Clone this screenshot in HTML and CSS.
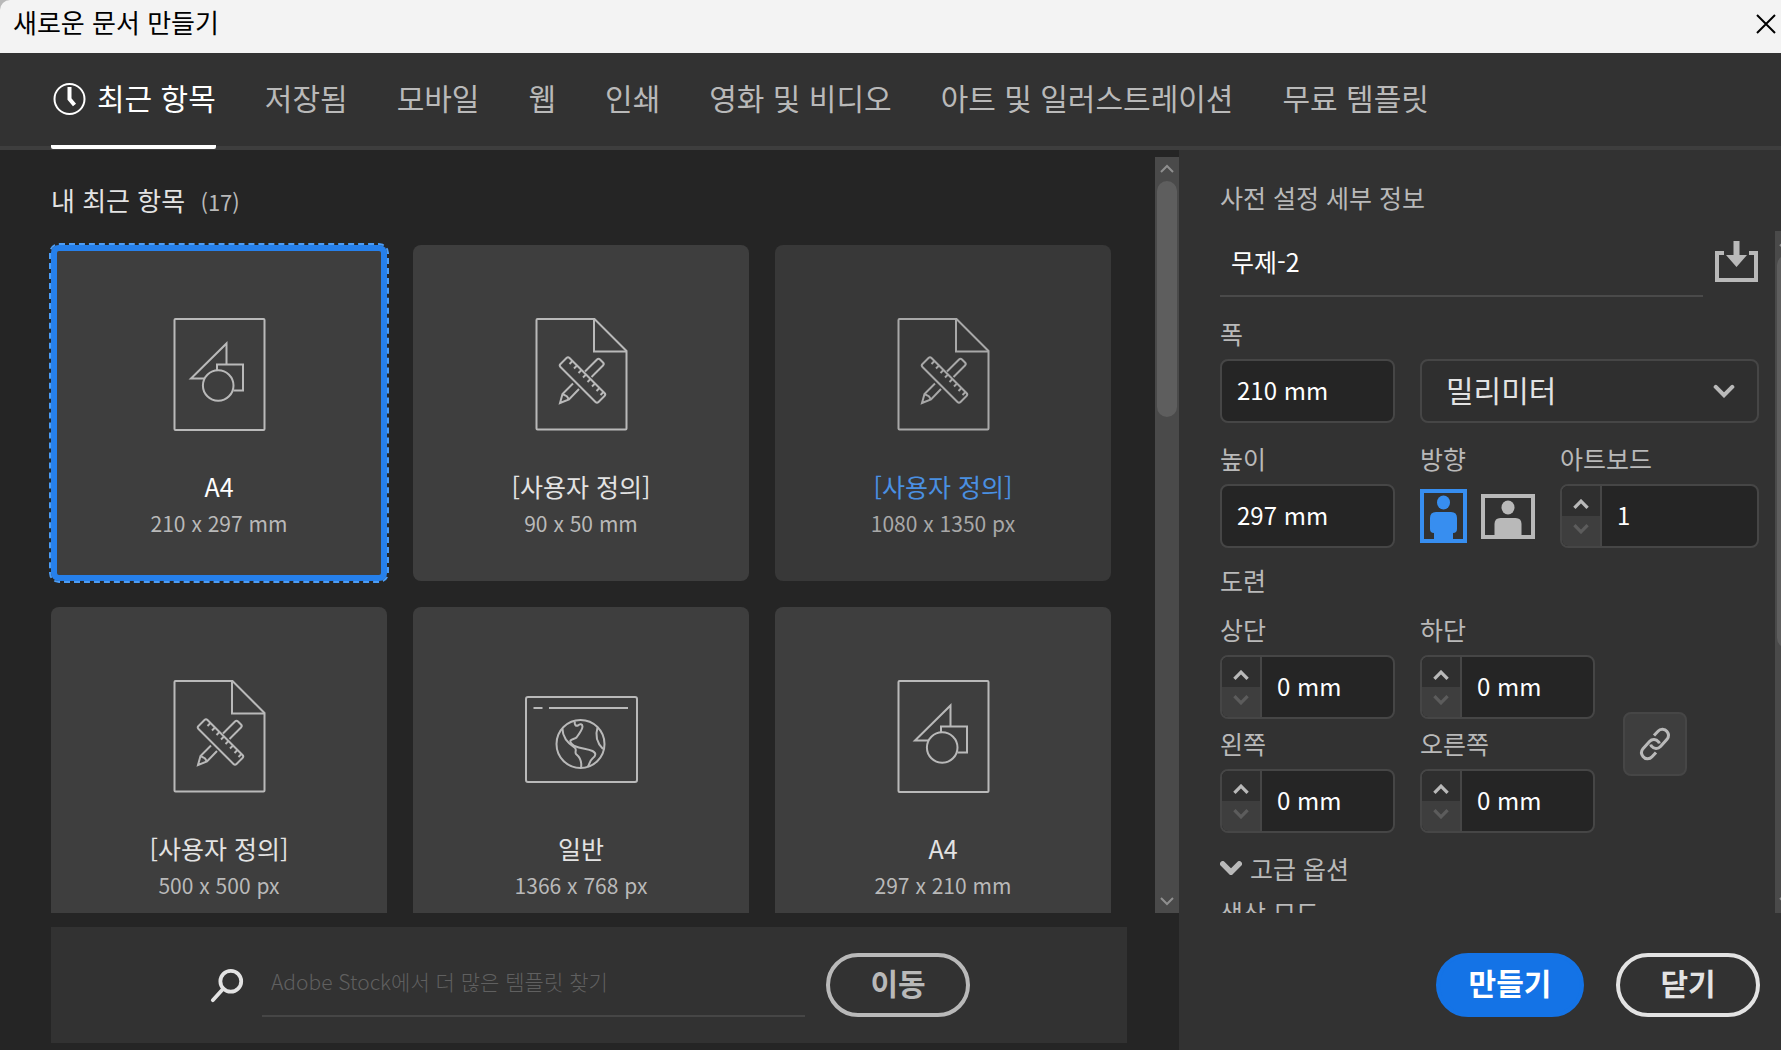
FILE: index.html
```html
<!DOCTYPE html>
<html lang="ko">
<head>
    <meta charset="UTF-8">
    <meta name="viewport" content="width=device-width, initial-scale=1">
    <title>새로운 문서 만들기</title>
    <link rel="stylesheet" href="styles.css">
</head>
<body>

<!-- shared icons -->
<svg class="sprite" aria-hidden="true">
    <symbol id="doc-art" viewBox="0 0 113 113">
        <g transform="translate(10.5 0)">
            <rect x="1" y="1" width="90" height="111" rx="1"/>
            <path d="M53 46.500V25.500L17.500 60.500H31"/>
            <path d="M43.500 52v-5.500h26v26H60"/>
            <circle cx="44.700" cy="67.500" r="15.300"/>
        </g>
    </symbol>
    <symbol id="doc-custom" viewBox="0 0 113 113">
        <g transform="translate(10.500 0)">
            <path d="M2 1h57l32 32v77.500q0 1-1 1H2q-1 0-1-1V2q0-1 1-1z"/>
            <path d="M58.500 1v32.500H91"/>
            <path d="M31 40q1.500-1.500 3 0l35 35q1.500 1.500 0 3l-6 6q-1.500 1.500-3 0l-35-35q-1.500-1.500 0-3z"/>
            <path d="M37 43l-3 3M41.500 47.500l-3 3M46 52l-3 3M50.500 56.500l-3 3M55 61l-3 3M59.500 65.500l-3 3M64 70l-3 3M68 74l-3 3"/>
            <path d="M49.500 53.500l12-12q1.500-1.500 3 0l3 3q1.500 1.500 0 3l-11.500 11.500"/>
            <path d="M37.500 65.500L27 76l-2.500 9 9-3.500L43.500 71"/>
            <path d="M27 76l3 1.500 1.500 1 2 3"/>
        </g>
    </symbol>
    <symbol id="doc-web" viewBox="0 0 113 113">
        <g transform="translate(0 16)">
            <rect x="1" y="1" width="111" height="85" rx="2"/>
            <path d="M8.500 12h9M24 12h79"/>
            <circle cx="55.500" cy="48" r="24"/>
            <path d="M37.500 33c0 8 5 14 12.500 19 2 2-.5 4 1 6 5 4 6 8 5 14"/>
            <path d="M50 25.500c-1 3 1 5 3 4 2-2 4.500-1.500 4.500 1 0 3-3 7-6 11-1.500 1.500-4 1-6 3-1 2 1 3.500 4 5.500 7 3 13 2.500 18 5 4 2 3.500 5 0 7.500-3 2.500-3 6-5 8.500"/>
            <path d="M72.500 31.500c-2.500 8-1 15 5.500 21.500"/>
        </g>
    </symbol>
    <symbol id="up" viewBox="0 0 16 10"><path d="M2 8l6-6 6 6"/></symbol>
    <symbol id="down" viewBox="0 0 16 10"><path d="M2 2l6 6 6-6"/></symbol>
</svg>

<header class="titlebar">
    <h1>새로운 문서 만들기</h1>
    <button class="close" aria-label="닫기">
        <svg width="20" height="20" viewBox="0 0 20 20"><path d="M1 1l18 18M19 1L1 19"/></svg>
    </button>
</header>

<nav class="tabs">
    <a href="#" class="tab active">
        <svg class="clock" width="36" height="34" viewBox="0 0 36 34">
            <circle cx="18.500" cy="17" r="15"/>
            <path d="M18.500 5v12l5 6"/>
        </svg>
        최근 항목
    </a>
    <a href="#" class="tab">저장됨</a>
    <a href="#" class="tab">모바일</a>
    <a href="#" class="tab">웹</a>
    <a href="#" class="tab">인쇄</a>
    <a href="#" class="tab">영화 및 비디오</a>
    <a href="#" class="tab">아트 및 일러스트레이션</a>
    <a href="#" class="tab">무료 템플릿</a>
</nav>

<main class="content">
    <section class="browse">
        <div class="scroller">
            <div class="list">
                <h2>내 최근 항목 <span class="count">(17)</span></h2>
                <div class="cards">
                    <button class="card selected">
                        <svg class="thumb"><use href="#doc-art"/></svg>
                        <span class="name">A4</span>
                        <span class="size">210 x 297 mm</span>
                    </button>
                    <button class="card">
                        <svg class="thumb"><use href="#doc-custom"/></svg>
                        <span class="name">[사용자 정의]</span>
                        <span class="size">90 x 50 mm</span>
                    </button>
                    <button class="card hovered">
                        <svg class="thumb"><use href="#doc-custom"/></svg>
                        <span class="name">[사용자 정의]</span>
                        <span class="size">1080 x 1350 px</span>
                    </button>
                    <button class="card">
                        <svg class="thumb"><use href="#doc-custom"/></svg>
                        <span class="name">[사용자 정의]</span>
                        <span class="size">500 x 500 px</span>
                    </button>
                    <button class="card">
                        <svg class="thumb"><use href="#doc-web"/></svg>
                        <span class="name">일반</span>
                        <span class="size">1366 x 768 px</span>
                    </button>
                    <button class="card">
                        <svg class="thumb"><use href="#doc-art"/></svg>
                        <span class="name">A4</span>
                        <span class="size">297 x 210 mm</span>
                    </button>
                </div>
            </div>
            <div class="scrollbar">
                <svg class="arrow"><use href="#up"/></svg>
                <div class="track"><div class="handle"></div></div>
                <svg class="arrow"><use href="#down"/></svg>
            </div>
        </div>

        <form class="stock">
            <svg class="search" width="36" height="38" viewBox="0 0 36 38">
                <circle cx="22" cy="14" r="11"/>
                <path d="M14 22L3 34"/>
            </svg>
            <input type="text" aria-label="Adobe Stock 검색" placeholder="Adobe Stock에서 더 많은 템플릿 찾기">
            <button type="button" class="pill">이동</button>
        </form>
    </section>

    <aside class="details">
        <h2>사전 설정 세부 정보</h2>
        <div class="scroller">
            <div class="form">
                <div class="doc-name">
                    <input type="text" aria-label="이름" value="무제-2">
                    <button class="save" aria-label="사전 설정 저장">
                        <svg width="44" height="42" viewBox="0 0 44 42">
                            <path class="tray" d="M9 12H2v27h39V12h-7"/>
                            <path class="arrow-fill" d="M18.500 0h6v14H32L21.500 26 11 14h7.500z"/>
                        </svg>
                    </button>
                </div>

                <div class="row">
                    <div class="field">
                        <label for="width">폭</label>
                        <input type="text" id="width" class="box" value="210 mm">
                    </div>
                    <div class="field grow end">
                        <div class="select">
                            <select class="box" aria-label="단위">
                                <option>밀리미터</option>
                            </select>
                            <svg class="chevron"><use href="#down"/></svg>
                        </div>
                    </div>
                </div>

                <div class="row">
                    <div class="field">
                        <label for="height">높이</label>
                        <input type="text" id="height" class="box" value="297 mm">
                    </div>
                    <div class="field orient">
                        <span class="label">방향</span>
                        <div class="orient-buttons">
                            <button class="on" aria-label="세로">
                                <svg width="47" height="54" viewBox="0 0 47 54">
                                    <rect class="frame" x="2" y="2" width="43" height="50"/>
                                    <ellipse cx="23.500" cy="13.500" rx="6.500" ry="7"/>
                                    <path d="M16 23h15q6 0 6 6v11q0 4-4 4v8H14v-8q-4 0-4-4V29q0-6 6-6z"/>
                                </svg>
                            </button>
                            <button aria-label="가로">
                                <svg width="54" height="45" viewBox="0 0 54 45">
                                    <rect class="frame" x="2" y="2" width="50" height="41"/>
                                    <ellipse cx="27" cy="13.500" rx="6.500" ry="7"/>
                                    <path d="M19.500 24h15q6 0 6 6v13h-27V30q0-6 6-6z"/>
                                </svg>
                            </button>
                        </div>
                    </div>
                    <div class="field grow">
                        <label for="artboards">아트보드</label>
                        <div class="spin">
                            <div class="steps">
                                <button aria-label="늘리기"><svg><use href="#up"/></svg></button>
                                <button aria-label="줄이기" disabled><svg><use href="#down"/></svg></button>
                            </div>
                            <input type="text" id="artboards" value="1">
                        </div>
                    </div>
                </div>

                <h3>도련</h3>
                <div class="bleed">
                    <div class="bleed-grid">
                        <div class="field">
                            <label for="top">상단</label>
                            <div class="spin">
                                <div class="steps">
                                    <button aria-label="늘리기"><svg><use href="#up"/></svg></button>
                                    <button aria-label="줄이기" disabled><svg><use href="#down"/></svg></button>
                                </div>
                                <input type="text" id="top" value="0 mm">
                            </div>
                        </div>
                        <div class="field">
                            <label for="bottom">하단</label>
                            <div class="spin">
                                <div class="steps">
                                    <button aria-label="늘리기"><svg><use href="#up"/></svg></button>
                                    <button aria-label="줄이기" disabled><svg><use href="#down"/></svg></button>
                                </div>
                                <input type="text" id="bottom" value="0 mm">
                            </div>
                        </div>
                        <div class="field">
                            <label for="left">왼쪽</label>
                            <div class="spin">
                                <div class="steps">
                                    <button aria-label="늘리기"><svg><use href="#up"/></svg></button>
                                    <button aria-label="줄이기" disabled><svg><use href="#down"/></svg></button>
                                </div>
                                <input type="text" id="left" value="0 mm">
                            </div>
                        </div>
                        <div class="field">
                            <label for="right">오른쪽</label>
                            <div class="spin">
                                <div class="steps">
                                    <button aria-label="늘리기"><svg><use href="#up"/></svg></button>
                                    <button aria-label="줄이기" disabled><svg><use href="#down"/></svg></button>
                                </div>
                                <input type="text" id="right" value="0 mm">
                            </div>
                        </div>
                    </div>
                    <button class="link" aria-label="모든 설정 동일하게">
                        <svg width="34" height="34" viewBox="0 0 34 34">
                            <path d="M16 8.500l4-4.300a5.800 5.800 0 0 1 9 .3c2 2.500 1.800 5.500 0 7.800l-6.500 7.200a5.800 5.800 0 0 1-9-.3 4 4 0 0 1-.8-1.700"/>
                            <path d="M18 25.500l-4 4.300a5.800 5.800 0 0 1-9-.3c-2-2.500-1.800-5.500 0-7.800l6.500-7.200a5.800 5.800 0 0 1 9 .3 4 4 0 0 1 .8 1.700"/>
                        </svg>
                    </button>
                </div>

                <button class="advanced">
                    <svg class="chevron"><use href="#down"/></svg>
                    고급 옵션
                </button>
                <label for="mode" class="mode">색상 모드</label>
                <select id="mode" class="box"><option>CMYK 색상</option></select>
            </div>
            <div class="scrollbar slim">
                <svg class="arrow"><use href="#up"/></svg>
                <div class="track"><div class="handle"></div></div>
                <svg class="arrow"><use href="#down"/></svg>
            </div>
        </div>
        <footer class="actions">
            <button class="pill primary">만들기</button>
            <button class="pill light">닫기</button>
        </footer>
    </aside>
</main>

</body>
</html>
```
FILE: styles.css
```css
* {
    box-sizing: border-box;
}
html {
    background-color: #b8b8b8;
}
body {
    margin: 0;
    height: 100vh;
    display: flex;
    flex-direction: column;
    overflow: hidden;
    font-family: "Noto Sans CJK KR", "Noto Sans", sans-serif;
    font-size: 26px;
    line-height: 36px;
    color: #b9b9b9;
}
button, input, select {
    font: inherit;
    color: inherit;
    margin: 0;
    padding: 0;
    border: 0;
    background: none;
}
button {
    cursor: pointer;
}
input, select {
    min-width: 0;
    outline: none;
}
h1, h2, h3 {
    margin: 0;
    font-size: 26px;
    font-weight: 400;
}
svg {
    display: block;
    fill: none;
    stroke: currentColor;
    stroke-width: 2;
}
.sprite {
    position: absolute;
    width: 0;
    height: 0;
}

/* window title */
.titlebar {
    display: flex;
    flex-shrink: 0;
    align-items: center;
    justify-content: space-between;
    height: 53px;
    padding: 0 5px 9px 13px;
    background-color: #f3f3f3;
    border-top-left-radius: 10px;
    color: #000;
}
.close {
    padding-top: 4px;
}

/* tabs */
.tabs {
    display: flex;
    flex-shrink: 0;
    gap: 49px;
    height: 97px;
    padding: 0 51px;
    background-color: #323232;
    border-bottom: 4px solid #3e3e3e;
    font-size: 30px;
}
.tab {
    display: flex;
    align-items: center;
    gap: 10px;
    height: 96px;
    padding-bottom: 8px;
    color: #b9b9b9;
    text-decoration: none;
    white-space: nowrap;
}
.tab.active {
    padding-bottom: 4px;
    border-bottom: 4px solid #fff;
    border-radius: 2px;
    color: #fff;
}
.clock {
    margin-top: 4px;
}
.clock path {
    stroke-width: 4;
}

.content {
    display: flex;
    flex: 1;
    min-height: 0;
}
.scroller {
    display: flex;
    flex: 1;
    min-height: 0;
}

/* left side */
.browse {
    display: flex;
    flex: 1;
    flex-direction: column;
    min-width: 0;
    padding: 7px 0;
    background-color: #252525;
}
.list {
    flex: 1;
    padding: 25px 44px 0 51px;
    overflow: hidden;
}
.list h2 {
    margin-bottom: 26px;
    color: #e3e3e3;
}
.count {
    margin-left: 8px;
    font-size: 22px;
    color: #b9b9b9;
}
.cards {
    display: grid;
    grid-template-columns: repeat(3, 1fr);
    gap: 26px;
}
.card {
    display: flex;
    flex-direction: column;
    align-items: center;
    aspect-ratio: 1;
    padding-top: 73px;
    border-radius: 8px;
    background-color: #3e3e3e;
    line-height: 32px;
}
.card.selected {
    box-shadow: inset 0 0 0 6px #2680eb;
    outline: 2px dashed #4b9cf5;
}
.card.hovered {
    background-color: #383838;
    color: #a8a8a8;
}
.card.hovered .name {
    color: #4a90e2;
}
.card.selected .name {
    color: #fff;
}
.thumb {
    width: 113px;
    height: 113px;
    margin-bottom: 39px;
}
.name {
    margin-bottom: 5px;
    font-size: 25px;
    color: #e3e3e3;
}
.size {
    font-size: 21px;
}

.scrollbar {
    display: flex;
    flex-direction: column;
    align-items: center;
    width: 24px;
    background-color: #4a4a4a;
}
.scrollbar .arrow {
    flex-shrink: 0;
    width: 16px;
    height: 10px;
    margin: 7px 0;
    color: #8f8f8f;
}
.track {
    flex: 1;
    width: 20px;
}
.handle {
    height: calc(100% / 3);
    border-radius: 10px;
    background-color: #5e5e5e;
}
.slim {
    align-items: flex-start;
    width: 6px;
    overflow: hidden;
}
.slim .arrow {
    margin-left: 3px;
}
.slim .track {
    margin-left: 2px;
}
.slim .handle {
    height: 62%;
}

.stock {
    display: flex;
    align-items: center;
    justify-content: center;
    height: 116px;
    margin: 14px 52px 0 51px;
    padding: 0 157px 0 158px;
    background-color: #323232;
}
.search {
    flex-shrink: 0;
    margin-right: 17px;
    padding-top: 2px;
    color: #e3e3e3;
    stroke-width: 4;
    stroke-linecap: round;
}
.stock input {
    flex: 1;
    height: 64px;
    margin-right: 21px;
    padding: 0 9px 6px;
    border-bottom: 2px solid #464646;
    font-size: 21px;
    font-weight: 300;
    color: #e3e3e3;
}
.stock input::placeholder {
    color: #606060;
    opacity: 1;
}

.pill {
    height: 64px;
    min-width: 144px;
    padding: 0 28px 6px;
    border: 4px solid #b9b9b9;
    border-radius: 32px;
    font-size: 30px;
    font-weight: 700;
}
.pill.light {
    border-color: #e3e3e3;
    color: #e3e3e3;
}
.pill.primary {
    min-width: 148px;
    border-color: #1473e6;
    background-color: #1473e6;
    color: #fff;
}

/* right side */
.details {
    display: flex;
    flex-direction: column;
    flex-shrink: 0;
    width: 602px;
    padding: 29px 0 0 41px;
    background-color: #323232;
    font-size: 25px;
}
.details h2, .details h3 {
    font-size: 25px;
}
.details h2 {
    margin-bottom: 16px;
}
.form {
    flex: 1;
    min-width: 0;
    margin-right: 16px;
    overflow: hidden;
}
.doc-name {
    display: flex;
    align-items: center;
    gap: 12px;
    margin-bottom: 18px;
}
.doc-name input {
    flex: 1;
    height: 66px;
    padding: 0 11px 4px;
    border-bottom: 2px solid #4a4a4a;
    color: #fff;
}
.save {
    padding-bottom: 4px;
}
.save .tray {
    stroke-width: 4;
}
.save .arrow-fill {
    fill: currentColor;
    stroke: none;
}
.row {
    display: flex;
    gap: 25px;
    margin-bottom: 17px;
}
.field {
    display: flex;
    flex-direction: column;
    gap: 8px;
    width: 175px;
}
.field.grow {
    flex: 1;
}
.field.end {
    justify-content: flex-end;
}
.field.orient {
    width: 115px;
}
.box {
    width: 100%;
    height: 64px;
    padding: 0 15px 4px;
    border: 2px solid #464646;
    border-radius: 8px;
    background-color: #252525;
    font-size: 24px;
    color: #fff;
}
.select {
    position: relative;
}
.select .box {
    appearance: none;
    padding: 0 24px 4px;
    background-color: #2f2f2f;
    font-size: 30px;
    color: #e3e3e3;
}
.chevron {
    width: 22px;
    height: 14px;
    stroke-width: 3;
    stroke-linecap: round;
}
.select .chevron {
    position: absolute;
    top: 25px;
    right: 24px;
    pointer-events: none;
}
.orient-buttons {
    display: flex;
    flex: 1;
    align-items: center;
    justify-content: space-between;
}
.orient-buttons svg {
    fill: currentColor;
    stroke: none;
}
.orient-buttons .frame {
    fill: none;
    stroke: currentColor;
    stroke-width: 4;
}
.orient-buttons .on {
    color: #378ef0;
}

.spin {
    display: flex;
    height: 64px;
    border: 2px solid #464646;
    border-radius: 8px;
    background-color: #252525;
    overflow: hidden;
}
.spin input {
    flex: 1;
    padding: 0 15px 3px;
    font-size: 24px;
    color: #fff;
}
.steps {
    display: flex;
    flex-direction: column;
    flex-shrink: 0;
    width: 40px;
    border-right: 2px solid #464646;
}
.steps button {
    display: flex;
    flex: 1;
    align-items: center;
    justify-content: center;
    padding-top: 6px;
    background-color: #2f2f2f;
}
.steps button:disabled {
    padding: 0 0 6px;
    background-color: #3e3e3e;
    color: #5c5c5c;
}
.steps svg {
    width: 18px;
    height: 11px;
    stroke-width: 3;
}

.form h3 {
    margin-top: -3px;
    margin-bottom: 13px;
}
.bleed {
    display: flex;
    align-items: flex-end;
    gap: 28px;
    margin-bottom: 17px;
}
.bleed-grid {
    display: grid;
    grid-template-columns: auto auto;
    gap: 6px 25px;
}
.link {
    display: flex;
    align-items: center;
    justify-content: center;
    width: 64px;
    height: 64px;
    margin-bottom: 57px;
    border: 2px solid #464646;
    border-radius: 8px;
    background-color: #3e3e3e;
}
.link svg {
    stroke-width: 3;
}
.advanced {
    display: flex;
    align-items: center;
    gap: 8px;
    margin-bottom: 8px;
}
.advanced .chevron {
    stroke-width: 4;
}
.mode {
    display: block;
}

.actions {
    display: flex;
    flex-shrink: 0;
    justify-content: flex-end;
    gap: 32px;
    height: 137px;
    padding: 40px 21px 0 0;
}
```
